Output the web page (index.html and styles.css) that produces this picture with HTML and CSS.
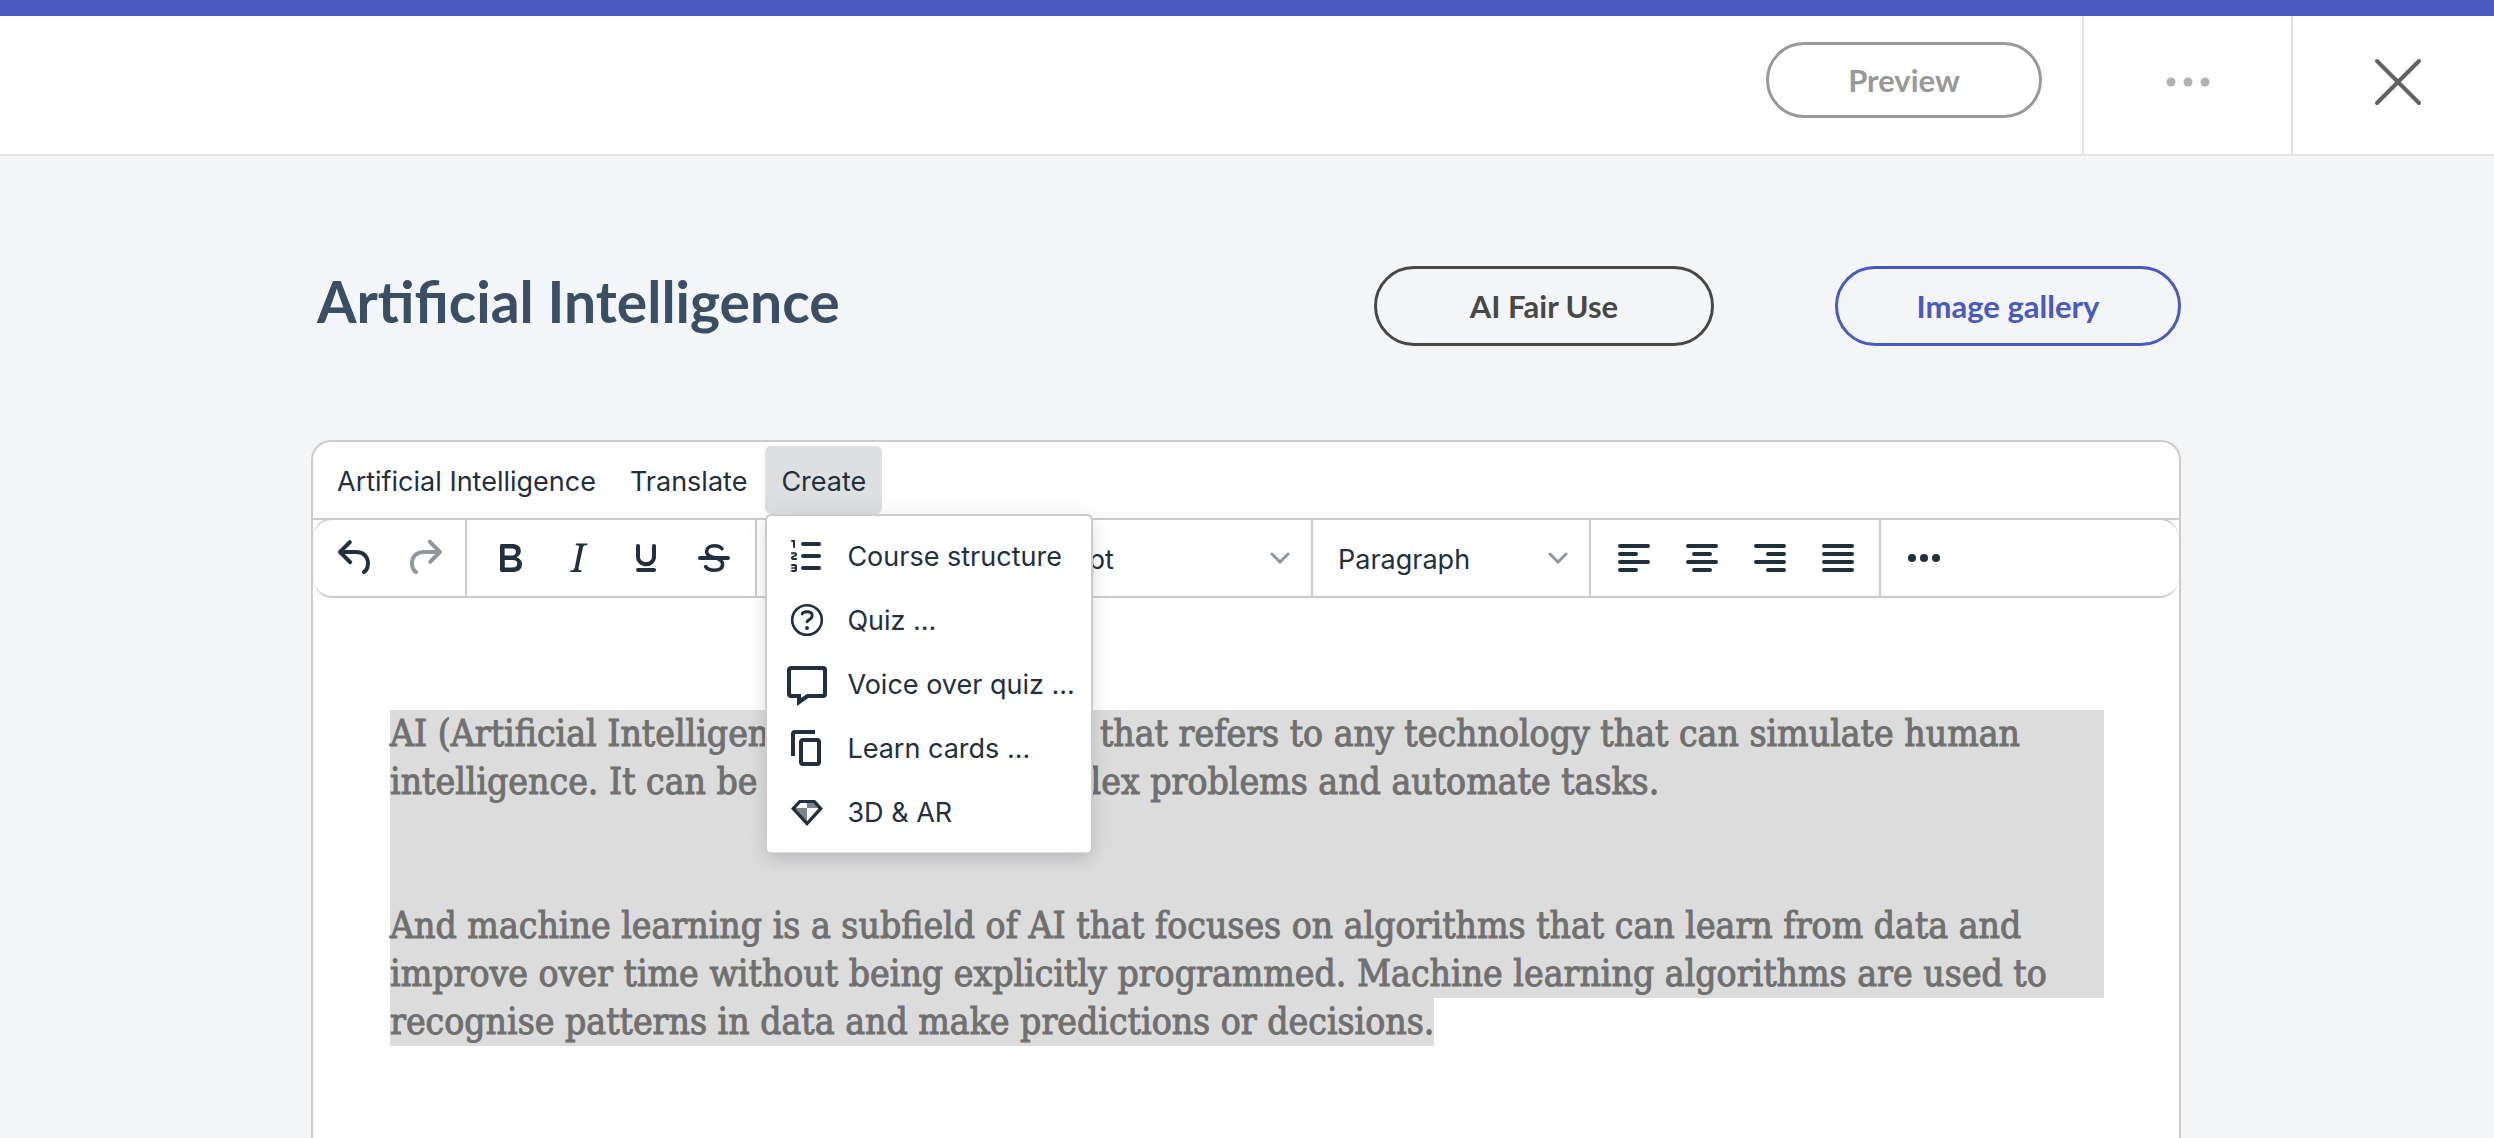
FILE: index.html
```html
<!DOCTYPE html>
<html lang="en">
  <head>
    <meta charset="utf-8">
    <title>Artificial Intelligence</title>
    <link rel="stylesheet" href="styles.css">
  </head>
  <body>
    <header class="topbar">
      <div class="topbar-preview">
        <button class="pill pill-preview">Preview</button>
      </div>
      <button class="topbar-button topbar-more" aria-label="More options">
        <svg width="44" height="12" viewBox="0 0 44 12" fill="#b2b2b2">
          <circle cx="5" cy="6" r="4.5"/><circle cx="22" cy="6" r="4.5"/><circle cx="39" cy="6" r="4.5"/>
        </svg>
      </button>
      <button class="topbar-button topbar-close" aria-label="Close">
        <svg width="48" height="48" viewBox="0 0 48 48" stroke="#626262" stroke-width="4" stroke-linecap="round">
          <path d="M3 3l42 42M45 3L3 45"/>
        </svg>
      </button>
    </header>
    <main class="page">
      <div class="page-head">
        <h1>Artificial Intelligence</h1>
        <div class="page-actions">
          <button class="pill pill-dark">AI Fair Use</button>
          <button class="pill pill-blue">Image gallery</button>
        </div>
      </div>

      <div class="editor">
        <div class="menubar">
          <button class="menubar-item">Artificial Intelligence</button>
          <button class="menubar-item">Translate</button>
          <div class="dropdown">
            <button class="menubar-item active" aria-expanded="true">Create</button>
            <div class="menu" role="menu">
              <button class="menu-item" role="menuitem">
                <svg class="icon" viewBox="0 0 24 24"><path d="M10 17h8c.6 0 1 .4 1 1s-.4 1-1 1h-8a1 1 0 0 1 0-2Zm0-6h8c.6 0 1 .4 1 1s-.4 1-1 1h-8a1 1 0 0 1 0-2Zm0-6h8c.6 0 1 .4 1 1s-.4 1-1 1h-8a1 1 0 1 1 0-2ZM6 4v3.5c0 .3-.2.5-.5.5a.5.5 0 0 1-.5-.5V5h-.5a.5.5 0 0 1 0-1H6Zm-1 8.8.2.2h1.3c.3 0 .5.2.5.5s-.2.5-.5.5H4.9a1 1 0 0 1-.9-1V13c0-.4.3-.8.6-1l1.2-.4.2-.3a.2.2 0 0 0-.2-.2H4.5a.5.5 0 0 1-.5-.5c0-.3.2-.5.5-.5h1.6c.5 0 .9.4.9 1v.1c0 .4-.3.8-.6 1l-1.2.4-.2.3ZM7 17v2c0 .6-.4 1-1 1H4.5a.5.5 0 0 1 0-1h1.2c.2 0 .3-.1.3-.3 0-.2-.1-.3-.3-.3H4.4a.4.4 0 1 1 0-.8h1.3c.2 0 .3-.1.3-.3 0-.2-.1-.3-.3-.3H4.5a.5.5 0 1 1 0-1H6c.6 0 1 .4 1 1Z"/></svg>
                Course structure
              </button>
              <button class="menu-item" role="menuitem">
                <svg class="icon" viewBox="0 0 24 24"><circle cx="12" cy="12" r="7.4" fill="none" stroke="currentColor" stroke-width="1.3"/><path d="M9.6 9.7a.7.7 0 0 1-.7-.8c0-1.1 1.5-1.8 3.2-1.8 1.8 0 3.2.8 3.2 2.4 0 1.4-.4 2.1-1.5 2.8-.2 0-.3.1-.3.2a2 2 0 0 0-.8.8.8.8 0 0 1-1.4-.6c.3-.7.8-1 1.3-1.5l.4-.2c.7-.4.8-.6.8-1.5 0-.5-.6-.9-1.7-.9-.5 0-1 .1-1.4.3-.2 0-.3.1-.3.2v-.2c0 .4-.4.8-.8.8Z"/><circle cx="12" cy="16" r="1"/></svg>
                Quiz ...
              </button>
              <button class="menu-item" role="menuitem">
                <svg class="icon" viewBox="0 0 24 24"><path fill-rule="evenodd" d="M4 3h16a2 2 0 0 1 2 2v12a2 2 0 0 1-2 2h-7.300L7 23v-4H4a2 2 0 0 1-2-2V5c0-1.100.9-2 2-2Zm.5 2a.5.5 0 0 0-.5.5v11c0 .3.200.5.5.5H9v2l3-2h7.500a.5.5 0 0 0 .5-.5v-11a.5.5 0 0 0-.5-.5h-15Z"/></svg>
                Voice over quiz ...
              </button>
              <button class="menu-item" role="menuitem">
                <svg class="icon" viewBox="0 0 24 24"><path d="M16 3H6a2 2 0 0 0-2 2v11h2V5h10V3Zm1 4a2 2 0 0 1 2 2v10a2 2 0 0 1-2 2h-7a2 2 0 0 1-2-2V9c0-1.200.9-2 2-2h7Zm0 12V9h-7v10h7Z"/></svg>
                Learn cards ...
              </button>
              <button class="menu-item" role="menuitem">
                <svg class="icon" viewBox="0 0 24 24"><path fill="#7d838c" d="M12 7.500h4L18 10h-6ZM6 10h6v7Z"/><path fill-rule="evenodd" d="M8 6h8l4 4.200L12 19 4 10.200 8 6Zm.800 1.500L6.300 10.200 12 16.600l5.700-6.400-2.500-2.700H8.800Z"/></svg>
                3D &amp; AR
              </button>
            </div>
          </div>
        </div>

        <div class="toolbar" role="toolbar">
          <div class="group">
            <button class="tool" aria-label="Undo"><svg class="icon" viewBox="0 0 24 24"><path d="M6.400 8H12c3.700 0 6.200 2 6.800 5.100.6 2.700-.4 5.600-2.300 6.800a1 1 0 0 1-1-1.800c1.100-.6 1.800-2.700 1.400-4.600-.5-2.100-2.100-3.500-4.900-3.500H6.400l3.300 3.300a1 1 0 1 1-1.400 1.400l-5-5a1 1 0 0 1 0-1.400l5-5a1 1 0 0 1 1.400 1.400L6.400 8Z"/></svg></button>
            <button class="tool" aria-label="Redo" disabled><svg class="icon" viewBox="0 0 24 24"><path d="M17.600 10H12c-2.800 0-4.400 1.400-4.900 3.500-.4 2 .3 4 1.400 4.600a1 1 0 1 1-1 1.800c-2-1.200-2.900-4.100-2.300-6.800.6-3 3-5.100 6.800-5.100h5.600l-3.300-3.300a1 1 0 1 1 1.400-1.400l5 5a1 1 0 0 1 0 1.400l-5 5a1 1 0 0 1-1.400-1.400l3.300-3.300Z"/></svg></button>
          </div>
          <div class="group">
            <button class="tool" aria-label="Bold"><svg class="icon" viewBox="0 0 24 24"><path d="M7.800 19c-.3 0-.5 0-.6-.2l-.2-.5V5.700c0-.2 0-.4.2-.5l.6-.2h5c1.500 0 2.700.3 3.500 1 .7.6 1.100 1.400 1.100 2.500a3 3 0 0 1-.6 1.900c-.4.6-1 1-1.600 1.200.4.100.9.300 1.300.6s.8.700 1 1.200c.4.4.5 1 .5 1.600 0 1.300-.4 2.300-1.300 3-.8.700-2.100 1-3.800 1H7.800Zm5-8.300c.6 0 1.200-.1 1.600-.5.4-.3.6-.7.6-1.300 0-1.100-.8-1.700-2.300-1.700H9.300v3.500h3.400Zm.5 6c.7 0 1.300-.1 1.700-.4.4-.4.6-.9.6-1.500s-.2-1-.7-1.400c-.4-.3-1-.4-2-.4H9.400v3.800h4Z"/></svg></button>
            <button class="tool" aria-label="Italic"><svg class="icon" viewBox="0 0 24 24"><path d="m16.700 4.700-.1.900h-.3c-.6 0-1 0-1.400.3-.3.300-.4.600-.5 1.100l-2.100 9.800v.6c0 .5.400.8 1.400.8h.2l-.2.800H8l.2-.8h.2c1.100 0 1.800-.5 2-1.500l2-9.800.1-.5c0-.6-.4-.8-1.400-.8h-.3l.2-.9h5.700Z"/></svg></button>
            <button class="tool" aria-label="Underline"><svg class="icon" viewBox="0 0 24 24"><path d="M16 5c.6 0 1 .4 1 1v5.500a4 4 0 0 1-.4 1.800l-1 1.400a5.300 5.300 0 0 1-5.500 1 5 5 0 0 1-1.600-1c-.5-.4-.8-.9-1.100-1.400a4 4 0 0 1-.4-1.800V6c0-.6.400-1 1-1s1 .4 1 1v5.500c0 .3 0 .6.200 1l.6.700a3.300 3.300 0 0 0 2.200.8 3.400 3.400 0 0 0 2.200-.8c.3-.2.4-.5.600-.8l.2-.9V6c0-.6.400-1 1-1ZM8 17h8c.6 0 1 .4 1 1s-.4 1-1 1H8a1 1 0 0 1 0-2Z"/></svg></button>
            <button class="tool" aria-label="Strikethrough"><svg class="icon" viewBox="0 0 24 24"><path fill="none" stroke="currentColor" stroke-width="1.800" stroke-linecap="round" d="M16 7.300C15.200 6.400 13.900 5.900 12.200 5.900 9.800 5.900 8.300 7 8.300 8.800c0 1.600 1.200 2.500 3.600 3 2.900.6 4.400 1.500 4.400 3.300 0 1.900-1.600 3-4.200 3-1.900 0-3.400-.6-4.300-1.800"/><path d="M5 11h14a1 1 0 0 1 0 2H5a1 1 0 0 1 0-2Z"/></svg></button>
          </div>
          <div class="group">
            <label class="select">
              <select aria-label="Font"><option>Roboto Slab</option></select>
              <svg class="chevron" viewBox="0 0 20 12"><path d="M2 2l8 8 8-8"/></svg>
            </label>
          </div>
          <div class="group">
            <label class="select">
              <select aria-label="Font size"><option>14pt</option></select>
              <svg class="chevron" viewBox="0 0 20 12"><path d="M2 2l8 8 8-8"/></svg>
            </label>
          </div>
          <div class="group">
            <label class="select">
              <select aria-label="Block format"><option>Paragraph</option></select>
              <svg class="chevron" viewBox="0 0 20 12"><path d="M2 2l8 8 8-8"/></svg>
            </label>
          </div>
          <div class="group">
            <button class="tool" aria-label="Align left"><svg class="icon lines" viewBox="0 0 24 24"><path d="M5 6h14M5 10h8M5 14h14M5 18h8"/></svg></button>
            <button class="tool" aria-label="Align center"><svg class="icon lines" viewBox="0 0 24 24"><path d="M5 6h14M8 10h8M5 14h14M8 18h8"/></svg></button>
            <button class="tool" aria-label="Align right"><svg class="icon lines" viewBox="0 0 24 24"><path d="M5 6h14M11 10h8M5 14h14M11 18h8"/></svg></button>
            <button class="tool" aria-label="Justify"><svg class="icon lines" viewBox="0 0 24 24"><path d="M5 6h14M5 10h14M5 14h14M5 18h14"/></svg></button>
          </div>
          <div class="group">
            <button class="tool" aria-label="More"><svg class="icon" viewBox="0 0 24 24"><circle cx="6" cy="12" r="2"/><circle cx="12" cy="12" r="2"/><circle cx="18" cy="12" r="2"/></svg></button>
          </div>
        </div>

        <div class="content" contenteditable="true" spellcheck="false">
          <div class="selected">
            <p>AI (Artificial Intelligence) is a broad term that refers to any technology that can simulate human<br>intelligence. It can be used to solve complex problems and automate tasks.</p>
            <p>And machine learning is a subfield of AI that focuses on algorithms that can learn from data and<br>improve over time without being explicitly programmed. Machine learning algorithms are used to</p>
          </div>
          <p class="selected selected-end">recognise patterns in data and make predictions or decisions.</p>
        </div>
      </div>
    </main>
  </body>
</html>
```
FILE: styles.css
```css
* {
  box-sizing: border-box;
}
body {
  margin: 0;
  min-height: 100vh;
  display: flex;
  flex-direction: column;
  background: #f3f5f7;
  font-family: Inter, "Liberation Sans", sans-serif;
  color: #222f3e;
}
button,
select {
  font: inherit;
  color: inherit;
  background: none;
  border: 0;
  padding: 0;
  margin: 0;
}

/* top bar */
.topbar {
  display: flex;
  justify-content: flex-end;
  height: 156px;
  border-top: 16px solid #4959c3;
  border-bottom: 2px solid #e4e4e4;
  background: #fff;
}
.topbar-preview {
  padding: 26px 40px 0 0;
}
.topbar-button {
  display: flex;
  align-items: center;
  justify-content: center;
  border-left: 2px solid #e4e4e4;
  padding-bottom: 6px;
}
.topbar-more {
  width: 209px;
}
.topbar-close {
  width: 203px;
  padding-left: 8px;
}
.pill {
  height: 80px;
  border: 3px solid;
  border-radius: 40px;
  font-family: Lato, sans-serif;
  font-size: 31px;
  font-weight: 700;
}
.pill-preview {
  width: 276px;
  height: 76px;
  color: #999;
}
.pill-dark {
  width: 340px;
  color: #484848;
}
.pill-blue {
  width: 346px;
  color: #4959c3;
}

/* page */
.page {
  flex: 1;
  padding: 0 313px 0 311px;
  display: flex;
  flex-direction: column;
}
.page-head {
  display: flex;
  justify-content: space-between;
  align-items: flex-start;
  padding: 110px 0 94px 6px;
}
.page-actions {
  display: flex;
  gap: 121px;
}
h1 {
  margin: 0;
  font-family: Lato, sans-serif;
  font-size: 57px;
  line-height: 70px;
  color: #3b4f64;
}

/* editor */
.editor {
  flex: 1;
  display: flex;
  flex-direction: column;
  border: 2px solid #ccc;
  border-bottom: 0;
  border-radius: 20px 20px 0 0;
  background: #fff;
}
.menubar {
  display: flex;
  gap: 2px;
  padding: 4px 8px;
  border-bottom: 2px solid #ccc;
}
.menubar-item {
  height: 68px;
  padding: 2px 16px 0;
  border-radius: 6px;
  font-size: 27px;
}
.menubar-item.active {
  background: #dedfe1;
}
.dropdown {
  position: relative;
}
.menu {
  position: absolute;
  z-index: 1;
  top: 68px;
  left: 0;
  width: 328px;
  padding: 8px 0;
  border: 2px solid #ccc;
  border-bottom-color: transparent;
  border-radius: 6px;
  background: #fff;
  background-clip: padding-box;
  box-shadow: 0 8px 16px -4px rgba(34, 47, 62, 0.15), 0 0 24px rgba(34, 47, 62, 0.08);
}
.menu-item {
  display: flex;
  align-items: center;
  gap: 16px;
  width: 100%;
  height: 64px;
  padding-left: 16px;
  font-size: 27px;
  white-space: nowrap;
}
.icon {
  display: block;
  width: 48px;
  height: 48px;
  flex: none;
  fill: currentColor;
}
.lines {
  stroke: currentColor;
  stroke-width: 2;
  stroke-linecap: round;
}

.toolbar {
  display: flex;
  height: 80px;
  margin-top: -2px;
  border: solid #ccc;
  border-width: 2px 0;
  border-radius: 20px;
}
.group {
  display: flex;
  align-items: center;
  border-right: 2px solid #ccc;
  padding: 0 7px 0 9px;
}
.group:last-child {
  border-right: 0;
}
.tool {
  display: flex;
  align-items: center;
  justify-content: center;
  width: 68px;
  height: 56px;
}
.tool:disabled {
  color: #90979f;
}
.select {
  display: grid;
  align-items: center;
  width: 260px;
}
.select select {
  grid-area: 1 / 1;
  appearance: none;
  height: 56px;
  padding: 2px 0 0 16px;
  font-size: 27px;
}
.chevron {
  grid-area: 1 / 1;
  justify-self: end;
  width: 20px;
  height: 12px;
  margin-right: 14px;
  fill: none;
  stroke: #90979f;
  stroke-width: 3;
  stroke-linecap: round;
  pointer-events: none;
}

/* text area */
.content {
  padding: 112px 75px 0 77px;
  outline: none;
  font-family: "Roboto Slab", "DejaVu Serif Condensed", "DejaVu Serif", serif;
  font-size: 37px;
  line-height: 48px;
  color: #707070;
  -webkit-text-stroke: 1px #707070;
}
.content p {
  margin: 0;
  white-space: nowrap;
}
.selected {
  background: #dcdcdc;
}
.selected p + p {
  margin-top: 96px;
}
.selected-end {
  width: fit-content;
}
```
